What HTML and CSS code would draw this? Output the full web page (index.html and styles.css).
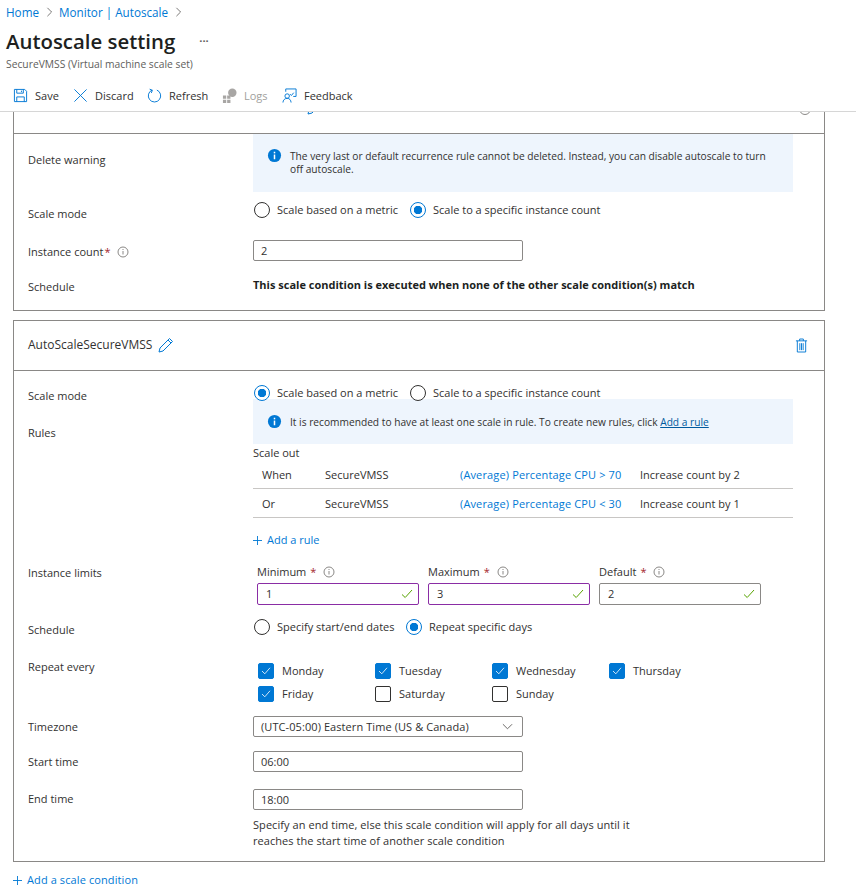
FILE: index.html
```html
<!DOCTYPE html>
<html lang="en">
<head>
    <meta charset="UTF-8">
    <meta name="viewport" content="width=device-width, initial-scale=1.0">
    <link rel="stylesheet" href="styles.css">
    <title>Autoscale setting</title>
</head>
<body>
    <header class="page-head">
        <nav class="crumbs">
            <a href="#">Home</a>
            <svg class="crumb-sep" viewBox="0 0 8 12"><path d="M1.5 1l5 5-5 5"/></svg>
            <a href="#">Monitor | Autoscale</a>
            <svg class="crumb-sep" viewBox="0 0 8 12"><path d="M1.5 1l5 5-5 5"/></svg>
        </nav>
        <div class="title-row">
            <h1>Autoscale setting</h1>
            <span class="more">···</span>
        </div>
        <p class="subtitle">SecureVMSS (Virtual machine scale set)</p>
        <div class="toolbar">
            <button class="tool tool-save">
                <svg viewBox="0 0 16 16"><path class="st-blue" d="M1.5 1.5h11l2 2v11h-13zM4 1.5v4h7v-4M4 14.5v-5h8v5M9 2.8v1.6"/></svg>
                Save
            </button>
            <button class="tool tool-discard">
                <svg viewBox="0 0 16 16"><path class="st-blue" d="M1.5 1.5l13 13M14.5 1.5l-13 13"/></svg>
                Discard
            </button>
            <button class="tool tool-refresh">
                <svg viewBox="0 0 16 16"><path class="st-blue" d="M10.5 2.2a6.6 6.6 0 1 1-5 0M2.8 1.2l2.9 1.2-1.1 2.9"/></svg>
                Refresh
            </button>
            <button class="tool tool-logs is-disabled">
                <svg viewBox="0 0 16 16"><circle class="fill-gray" cx="11" cy="5" r="4.5"/><path class="fill-gray" d="M1 8h3.5v3.5H1zM5.5 8H9v3.5H5.5zM1 12.5h3.5V16H1zM5.5 12.5H9V16H5.5z"/></svg>
                Logs
            </button>
            <button class="tool tool-feedback">
                <svg viewBox="0 0 16 16"><path class="st-blue" d="M4 4V1h11v8h-3M5.5 6.2a2.4 2.4 0 1 1 0 4.8 2.4 2.4 0 0 1 0-4.8zM1 15.500c0-2.500 2-4.500 4.500-4.500s4 1.800 4.200 4.500M8.500 6.500l1.500 1.500 2.500-3"/></svg>
                Feedback
            </button>
        </div>
    </header>

    <main class="content">
        <!-- first condition, scrolled under the toolbar -->
        <section class="card card-clipped">
            <div class="card-head">
                <svg class="clip-pen" viewBox="0 0 16 16"><path class="st-blue" d="M11 2l3 3-9 9-4 1 1-4z"/></svg>
                <span class="clip-ring"></span>
            </div>
            <div class="row">
                <div class="label lb-warning">Delete warning</div>
                <div class="notice notice-tall">
                    <svg class="info-solid" viewBox="0 0 16 16"><circle cx="8" cy="8" r="7"/><rect class="info-mark" x="7.200" y="7" width="1.600" height="5"/><rect class="info-mark" x="7.200" y="4" width="1.600" height="1.700"/></svg>
                    <p>The very last or default recurrence rule cannot be deleted. Instead, you can disable autoscale to turn off autoscale.</p>
                </div>
            </div>
            <div class="row mt-6">
                <div class="label lb-8">Scale mode</div>
                <div class="radios">
                    <label class="radio w-156"><span class="dot"></span>Scale based on a metric</label>
                    <label class="radio"><span class="dot on"></span>Scale to a specific instance count</label>
                </div>
            </div>
            <div class="row mt-18">
                <div class="label lb-4">Instance count<span class="req req-tight">*</span>
                    <svg class="info-line" viewBox="0 0 12 12"><circle cx="6" cy="6" r="5"/><path d="M6 5v3.500M6 3v1"/></svg>
                </div>
                <input class="text-input" type="text" value="2" readonly>
            </div>
            <div class="row mt-16">
                <div class="label lb-2">Schedule</div>
                <div class="strong">This scale condition is executed when none of the other scale condition(s) match</div>
            </div>
        </section>

        <section class="card card-second">
            <div class="card-head card-head-full">
                <span class="cond-name">AutoScaleSecureVMSS</span>
                <svg class="pen" viewBox="0 0 16 16"><path class="st-blue" d="M11.500 1.500l3 3-9.500 9.500-4 1 1-4zM10 3l3 3"/></svg>
                <svg class="trash" viewBox="0 0 14 16"><path class="st-blue" d="M1 3h12M5 3V1h4v2M2.500 3v12h9V3M5.200 5.500v7.500M7 5.500v7.500M8.800 5.500v7.500"/></svg>
            </div>

            <div class="row mt-11">
                <div class="label lb-6">Scale mode</div>
                <div class="radios radios-over">
                    <label class="radio w-156"><span class="dot on"></span>Scale based on a metric</label>
                    <label class="radio"><span class="dot"></span>Scale to a specific instance count</label>
                </div>
            </div>

            <div class="row mt-neg">
                <div class="label lb-rules">Rules</div>
                <div>
                    <div class="notice notice-short">
                        <svg class="info-solid" viewBox="0 0 16 16"><circle cx="8" cy="8" r="7"/><rect class="info-mark" x="7.200" y="7" width="1.600" height="5"/><rect class="info-mark" x="7.200" y="4" width="1.600" height="1.700"/></svg>
                        <p>It is recommended to have at least one scale in rule. To create new rules, click <a class="plain-link" href="#">Add a rule</a></p>
                    </div>
                    <div class="scale-out">Scale out</div>
                    <div class="rule rule-first">
                        <span>When</span><span>SecureVMSS</span><a href="#">(Average) Percentage CPU &gt; 70</a><span>Increase count by 2</span>
                    </div>
                    <div class="rule">
                        <span>Or</span><span>SecureVMSS</span><a href="#">(Average) Percentage CPU &lt; 30</a><span>Increase count by 1</span>
                    </div>
                    <a class="add-link add-rule" href="#">
                        <svg viewBox="0 0 10 10"><path d="M5 0v10M0 5h10"/></svg>Add a rule
                    </a>
                </div>
            </div>

            <div class="row mt-16">
                <div class="label lb-1">Instance limits</div>
                <div class="limits">
                    <div class="limit">
                        <div class="limit-label">Minimum<span class="req">*</span>
                            <svg class="info-line" viewBox="0 0 12 12"><circle cx="6" cy="6" r="5"/><path d="M6 5v3.500M6 3v1"/></svg>
                        </div>
                        <div class="checked-input is-edited"><span>1</span>
                            <svg viewBox="0 0 12 10"><path d="M1 5.500l3.200 3L11 1"/></svg>
                        </div>
                    </div>
                    <div class="limit">
                        <div class="limit-label">Maximum<span class="req">*</span>
                            <svg class="info-line" viewBox="0 0 12 12"><circle cx="6" cy="6" r="5"/><path d="M6 5v3.500M6 3v1"/></svg>
                        </div>
                        <div class="checked-input is-edited"><span>3</span>
                            <svg viewBox="0 0 12 10"><path d="M1 5.500l3.200 3L11 1"/></svg>
                        </div>
                    </div>
                    <div class="limit">
                        <div class="limit-label">Default<span class="req">*</span>
                            <svg class="info-line" viewBox="0 0 12 12"><circle cx="6" cy="6" r="5"/><path d="M6 5v3.500M6 3v1"/></svg>
                        </div>
                        <div class="checked-input"><span>2</span>
                            <svg viewBox="0 0 12 10"><path d="M1 5.500l3.200 3L11 1"/></svg>
                        </div>
                    </div>
                </div>
            </div>

            <div class="row mt-11">
                <div class="label lb-6">Schedule</div>
                <div class="radios">
                    <label class="radio w-152"><span class="dot"></span>Specify start/end dates</label>
                    <label class="radio"><span class="dot on"></span>Repeat specific days</label>
                </div>
            </div>

            <div class="row mt-25">
                <div class="label lb-neg">Repeat every</div>
                <div class="days">
                    <label class="day"><span class="box on"><svg viewBox="0 0 12 10"><path d="M1 5l3.500 3.500L11 1"/></svg></span>Monday</label>
                    <label class="day"><span class="box on"><svg viewBox="0 0 12 10"><path d="M1 5l3.500 3.500L11 1"/></svg></span>Tuesday</label>
                    <label class="day"><span class="box on"><svg viewBox="0 0 12 10"><path d="M1 5l3.500 3.500L11 1"/></svg></span>Wednesday</label>
                    <label class="day"><span class="box on"><svg viewBox="0 0 12 10"><path d="M1 5l3.500 3.500L11 1"/></svg></span>Thursday</label>
                    <label class="day"><span class="box on"><svg viewBox="0 0 12 10"><path d="M1 5l3.500 3.500L11 1"/></svg></span>Friday</label>
                    <label class="day"><span class="box"></span>Saturday</label>
                    <label class="day"><span class="box"></span>Sunday</label>
                </div>
            </div>

            <div class="row mt-14">
                <div class="label lb-3">Timezone</div>
                <div class="select">
                    <span>(UTC-05:00) Eastern Time (US &amp; Canada)</span>
                    <svg viewBox="0 0 12 7"><path d="M1 1l5 5 5-5"/></svg>
                </div>
            </div>

            <div class="row mt-14">
                <div class="label lb-3">Start time</div>
                <input class="text-input" type="text" value="06:00" readonly>
            </div>

            <div class="row mt-17">
                <div class="label lb-2">End time</div>
                <div>
                    <input class="text-input" type="text" value="18:00" readonly>
                    <p class="help">Specify an end time, else this scale condition will apply for all days until it reaches the start time of another scale condition</p>
                </div>
            </div>
        </section>

        <a class="add-link add-condition" href="#">
            <svg viewBox="0 0 10 10"><path d="M5 0v10M0 5h10"/></svg>Add a scale condition
        </a>
    </main>
</body>
</html>
```

FILE: styles.css
```css
/* general */
* {
    box-sizing: border-box;
}

body {
    margin: 0;
    height: 893px;
    overflow: hidden;
    background-color: #fff;
    color: #323130;
    font-family: "Open Sans", "Noto Sans", sans-serif;
    font-size: 11px;
    line-height: 16px;
}

a {
    color: #0078d4;
    text-decoration: none;
}

p {
    margin: 0;
}

svg path {
    fill: none;
}

.st-blue {
    stroke: #0078d4;
    stroke-width: 1;
    fill: none;
}

svg path.fill-gray,
.fill-gray {
    fill: #a8a6a4;
}

/* header */
.page-head {
    height: 112px;
    padding: 4px 0 0 6px;
    border-bottom: 1px solid #d6d6d6;
}

.crumbs {
    display: flex;
    align-items: center;
    height: 16px;
    font-size: 11.7px;
}

.crumb-sep {
    width: 7px;
    height: 10px;
    margin: 0 6px 0 7px;
}

.crumb-sep path {
    stroke: #605e5c;
}

.title-row {
    display: flex;
    align-items: center;
    height: 30px;
    margin-top: 6px;
}

h1 {
    margin: 0;
    font-size: 20.4px;
    font-weight: 600;
    line-height: 30px;
    color: #201f1e;
}

.more {
    margin-left: 24px;
    font-size: 11px;
    font-weight: 700;
    color: #605e5c;
}

.subtitle {
    height: 14px;
    margin-top: 1px;
    font-size: 10.3px;
    line-height: 14px;
    color: #605e5c;
}

.toolbar {
    display: flex;
    margin-top: 16px;
    padding-left: 7px;
}

.tool {
    display: flex;
    align-items: center;
    gap: 7px;
    height: 16px;
    padding: 0;
    border: 0;
    background: none;
    color: #323130;
    font-family: inherit;
    font-size: 11px;
}

.tool svg {
    width: 15px;
    height: 15px;
}

.tool-save { width: 60px; }
.tool-discard { width: 74px; }
.tool-refresh { width: 75px; }
.tool-logs { width: 60px; }

.is-disabled {
    color: #a19f9d;
}

/* cards */
.content {
    padding: 0 0 0 13px;
}

.card {
    width: 812px;
    border: 1px solid #8a8886;
    padding: 0 14px;
}

.card-clipped {
    height: 199px;
    border-top: 0;
}

.card-second {
    height: 542px;
    margin-top: 9px;
}

.card-head {
    display: flex;
    height: 22px;
    margin: 0 -14px;
    border-bottom: 1px solid #8a8886;
    overflow: hidden;
}

.clip-pen {
    width: 16px;
    height: 16px;
    margin: -13px 0 0 293px;
}

.clip-ring {
    width: 12px;
    height: 12px;
    margin: -9px 0 0 476px;
    border: 1px solid #8a8886;
    border-radius: 50%;
}

.card-head-full {
    align-items: center;
    height: 50px;
    padding: 0 14px 1px;
}

.cond-name {
    font-size: 12px;
}

.pen {
    width: 16px;
    height: 16px;
    margin-left: 6px;
}

.trash {
    width: 13px;
    height: 15px;
    margin-left: auto;
    margin-right: 2px;
}

/* form rows */
.row {
    display: grid;
    grid-template-columns: 225px 540px;
}

.label {
    white-space: nowrap;
}

.lb-1 { padding-top: 1px; }
.lb-2 { padding-top: 2px; }
.lb-3 { padding-top: 3px; }
.lb-4 { padding-top: 4px; }
.lb-6 { padding-top: 6px; }
.lb-8 { padding-top: 8px; }
.lb-warning { padding-top: 18px; }
.lb-rules { padding-top: 26px; }
.lb-neg { margin-top: -4px; }

.mt-6 { margin-top: 6px; }
.mt-11 { margin-top: 11px; }
.mt-14 { margin-top: 14px; }
.mt-16 { margin-top: 16px; }
.mt-17 { margin-top: 17px; }
.mt-18 { margin-top: 18px; }
.mt-25 { margin-top: 25px; }
.mt-neg { margin-top: -5px; }

.req {
    margin-left: 4px;
    color: #a4262c;
}

.req-tight {
    margin-left: 1px;
}

.info-line {
    width: 12px;
    height: 12px;
    margin-left: 4px;
    vertical-align: -2px;
}

.info-line circle,
.info-line path {
    fill: none;
    stroke: #8a8886;
}

.strong {
    font-weight: 700;
    color: #201f1e;
}

/* notices */
.notice {
    display: flex;
    gap: 8px;
    width: 540px;
    padding: 14px 0 0 14px;
    background-color: #eef5fd;
    font-size: 10.2px;
}

.notice-tall {
    height: 58px;
}

.notice-tall p {
    width: 490px;
    padding-top: 2px;
    line-height: 13px;
}

.notice-short {
    height: 45px;
    padding-top: 15px;
}

.info-solid {
    flex: none;
    width: 15px;
    height: 15px;
}

.info-solid circle {
    fill: #0078d4;
}

.info-mark {
    fill: #fff;
}

.plain-link {
    color: #005a9e;
    text-decoration: underline;
}

/* radios */
.radios {
    display: flex;
}

/* these radios sit on the top edge of the notice below them */
.radios-over {
    position: relative;
    z-index: 1;
}

.radio {
    display: flex;
    align-items: center;
    gap: 7px;
    padding-left: 1px;
}

.w-156 { width: 156px; }
.w-152 { width: 152px; }

.dot {
    flex: none;
    width: 16px;
    height: 16px;
    border: 1px solid #323130;
    border-radius: 50%;
    background-color: #fff;
}

.dot.on {
    border-color: #0078d4;
    background: radial-gradient(circle, #0078d4 0 4px, #fff 4.500px);
}

/* inputs */
.text-input {
    display: block;
    width: 270px;
    height: 21px;
    padding: 0 7px;
    border: 1px solid #8a8886;
    border-radius: 2px;
    color: #323130;
    font-family: inherit;
    font-size: 11px;
    outline: none;
}

.select {
    display: flex;
    align-items: center;
    justify-content: space-between;
    width: 270px;
    height: 21px;
    padding: 0 9px 0 7px;
    border: 1px solid #8a8886;
    border-radius: 2px;
    letter-spacing: 0.08px;
}

.select svg {
    width: 11px;
    height: 7px;
}

.select path {
    stroke: #605e5c;
}

.help {
    width: 400px;
    margin-top: 7px;
    letter-spacing: 0.06px;
}

/* rules table */
.scale-out {
    height: 16px;
    margin-top: 1px;
}

.rule {
    display: grid;
    grid-template-columns: 63px 135px 180px 1fr;
    align-items: center;
    height: 29px;
    padding: 1px 0 0 9px;
    border-bottom: 1px solid #c8c6c4;
}

.rule-first {
    height: 28px;
    padding-top: 0;
}

.rule a {
    color: #0078d4;
    letter-spacing: 0.14px;
}

.add-link {
    display: flex;
    align-items: center;
    color: #0078d4;
}

.add-link svg {
    width: 9px;
    height: 9px;
    margin-right: 5px;
}

.add-link path {
    stroke: #0078d4;
}

.add-rule {
    margin-top: 14px;
}

.add-condition {
    margin-top: 10px;
    letter-spacing: 0.1px;
}

/* instance limits */
.limits {
    display: flex;
    gap: 9px;
    padding-left: 4px;
}

.limit {
    width: 162px;
}

.limit-label {
    height: 19px;
}

.checked-input {
    display: flex;
    align-items: center;
    justify-content: space-between;
    height: 22px;
    padding: 0 5px 0 8px;
    border: 1px solid #8a8886;
    border-radius: 2px;
}

.checked-input.is-edited {
    border-color: #8a2da5;
}

.checked-input svg {
    width: 12px;
    height: 10px;
}

.checked-input path {
    stroke: #57a300;
}

/* days */
.days {
    display: grid;
    grid-template-columns: repeat(4, 117px);
    row-gap: 7px;
    padding-left: 5px;
}

.day {
    display: flex;
    align-items: center;
    gap: 8px;
}

.box {
    display: flex;
    align-items: center;
    justify-content: center;
    flex: none;
    width: 16px;
    height: 16px;
    border: 1px solid #323130;
    border-radius: 2px;
}

.box.on {
    background-color: #0078d4;
    border-color: #0078d4;
}

.box svg {
    width: 10px;
    height: 8px;
}

.box path {
    stroke: #fff;
}
```
